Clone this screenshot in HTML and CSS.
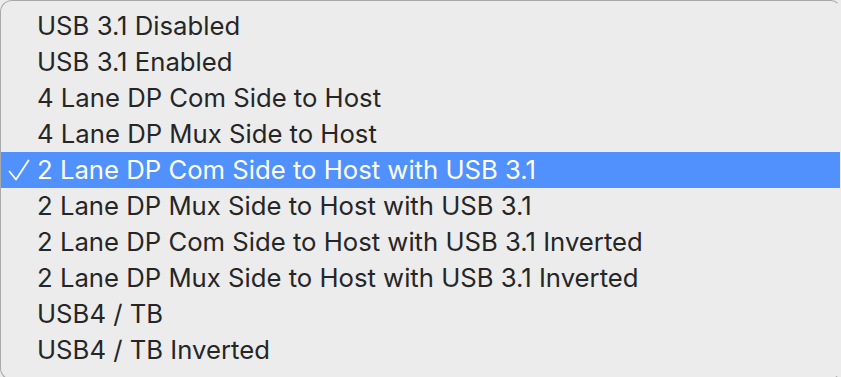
FILE: index.html
```html
<!DOCTYPE html>
<html>
<head>
<meta charset="utf-8">
<link rel="stylesheet" href="styles.css">
</head>
<body>
<div class="menu">
  <div class="item"><span class="check"></span><span class="label">USB 3.1 Disabled</span></div>
  <div class="item"><span class="check"></span><span class="label">USB 3.1 Enabled</span></div>
  <div class="item"><span class="check"></span><span class="label">4 Lane DP Com Side to Host</span></div>
  <div class="item"><span class="check"></span><span class="label">4 Lane DP Mux Side to Host</span></div>
  <div class="item selected"><span class="check"><svg width="24" height="24" viewBox="0 0 24 24"><path d="M3.5 13.5 L10 21.5 L22.5 2.5" fill="none" stroke="#fff" stroke-width="1.8" stroke-linecap="round" stroke-linejoin="round"/></svg></span><span class="label">2 Lane DP Com Side to Host with USB 3.1</span></div>
  <div class="item"><span class="check"></span><span class="label">2 Lane DP Mux Side to Host with USB 3.1</span></div>
  <div class="item"><span class="check"></span><span class="label">2 Lane DP Com Side to Host with USB 3.1 Inverted</span></div>
  <div class="item"><span class="check"></span><span class="label">2 Lane DP Mux Side to Host with USB 3.1 Inverted</span></div>
  <div class="item"><span class="check"></span><span class="label">USB4 / TB</span></div>
  <div class="item"><span class="check"></span><span class="label">USB4 / TB Inverted</span></div>
</div>
</body>
</html>
```
FILE: styles.css
```css
html, body {
  margin: 0;
  padding: 0;
  background: #ececec;
  overflow: hidden;
}
.menu {
  box-sizing: border-box;
  width: 841px;
  height: 380px;
  background: #ececec;
  border: 1px solid #a9a9a9;
  border-right-color: #ececec;
  border-radius: 12px 10px 12px 12px;
  padding: 7px 0 0 0;
  font-family: Inter, "Noto Sans", sans-serif;
  font-size: 25.7px;
  color: #262626;
  display: flex;
  flex-direction: column;
}
.item {
  height: 36px;
  display: flex;
  align-items: center;
  padding-left: 5px;
}
.label {
  margin-top: -1px;
}
.check {
  width: 31px;
  height: 24px;
  display: flex;
  align-items: center;
}
.selected {
  background: #5191fd;
  color: #ffffff;
}
```
